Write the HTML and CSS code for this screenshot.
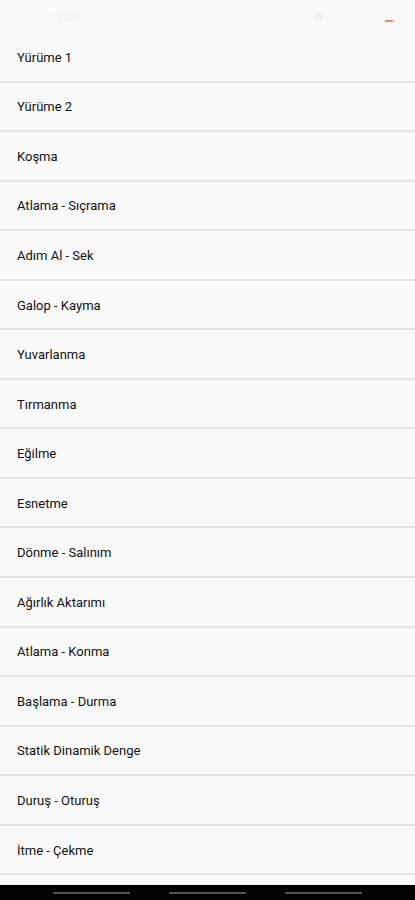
FILE: index.html
```html
<!DOCTYPE html>
<html lang="tr">
<head>
<meta charset="utf-8">
<link rel="stylesheet" href="styles.css">
</head>
<body>
<div class="screen">
  <div class="status">
    <span class="status-left">12:00</span>
    <span class="status-right">
      <span class="dot"></span>
      <span class="dash"></span>
    </span>
  </div>
  <ul class="list">
    <li class="item">Yürüme 1</li>
    <li class="item">Yürüme 2</li>
    <li class="item">Koşma</li>
    <li class="item">Atlama - Sıçrama</li>
    <li class="item">Adım Al - Sek</li>
    <li class="item">Galop - Kayma</li>
    <li class="item">Yuvarlanma</li>
    <li class="item">Tırmanma</li>
    <li class="item">Eğilme</li>
    <li class="item">Esnetme</li>
    <li class="item">Dönme - Salınım</li>
    <li class="item">Ağırlık Aktarımı</li>
    <li class="item">Atlama - Konma</li>
    <li class="item">Başlama - Durma</li>
    <li class="item">Statik Dinamik Denge</li>
    <li class="item">Duruş - Oturuş</li>
    <li class="item">İtme - Çekme</li>
  </ul>
  <div class="spacer"></div>
  <div class="navbar">
    <span class="navline"></span>
    <span class="navline"></span>
    <span class="navline"></span>
  </div>
</div>
</body>
</html>
```

FILE: styles.css
```css
* { box-sizing: border-box; }
html, body {
  margin: 0;
  padding: 0;
  background: #fafafa;
}
.screen {
  width: 415px;
  height: 900px;
  display: flex;
  flex-direction: column;
  background: #fafafa;
  font-family: Roboto, "Liberation Sans", sans-serif;
  overflow: hidden;
}
.status {
  height: 33px;
  flex: none;
  display: flex;
  align-items: center;
  justify-content: space-between;
  padding: 0 22px 0 50px;
}
.status-left {
  font-size: 12px;
  color: #f3f3f3;
}
.status-right {
  display: flex;
  align-items: center;
  gap: 62px;
}
.dot {
  width: 10px;
  height: 10px;
  border-radius: 50%;
  background: #f3f3f3;
}
.dash {
  width: 8px;
  height: 2px;
  background: #ef8a62;
  margin-top: 8px;
}
.list {
  list-style: none;
  margin: 0;
  padding: 0;
  flex: none;
}
.item {
  height: 49.56px;
  border-bottom: 2px solid #e6e6e6;
  display: flex;
  align-items: center;
  padding-left: 17px;
  padding-top: 1px;
  font-size: 13px;
  color: #111;
}
.spacer {
  flex: 1;
}
.navbar {
  height: 15px;
  flex: none;
  background: #000;
  display: flex;
  justify-content: center;
  align-items: center;
  gap: 39px;
}
.navline {
  width: 77px;
  height: 2px;
  background: #555;
}
```
